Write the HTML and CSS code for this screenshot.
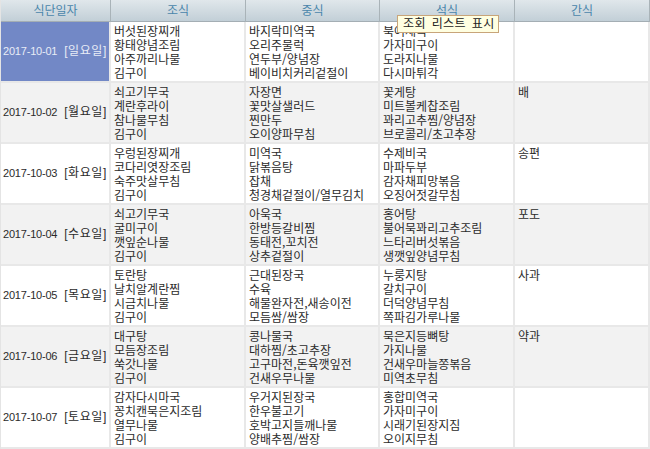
FILE: index.html
```html
<!DOCTYPE html>
<html lang="ko">
<head>
<meta charset="utf-8">
<title>식단 조회</title>
<link rel="stylesheet" href="styles.css">
</head>
<body>
<div class="wrap">
<table class="menu">
<colgroup><col class="c-date"><col class="c-a"><col class="c-b"><col class="c-a"><col class="c-last"></colgroup>
<thead>
<tr><th>식단일자</th><th>조식</th><th>중식</th><th>석식</th><th>간식</th></tr>
</thead>
<tbody>
<tr class="selected"><td class="date">2017-10-01 <span class="day">[일요일]</span></td><td>버섯된장찌개<br>황태양념조림<br>아주까리나물<br>김구이</td><td>바지락미역국<br>오리주물럭<br>연두부/양념장<br>베이비치커리겉절이</td><td>북어채국<br>가자미구이<br>도라지나물<br>다시마튀각</td><td></td></tr>
<tr class="alt"><td class="date">2017-10-02 <span class="day">[월요일]</span></td><td>쇠고기무국<br>계란후라이<br>참나물무침<br>김구이</td><td>자장면<br>꽃맛살샐러드<br>찐만두<br>오이양파무침</td><td>꽃게탕<br>미트볼케찹조림<br>꽈리고추찜/양념장<br>브로콜리/초고추장</td><td>배</td></tr>
<tr><td class="date">2017-10-03 <span class="day">[화요일]</span></td><td>우렁된장찌개<br>코다리엿장조림<br>숙주맛살무침<br>김구이</td><td>미역국<br>닭볶음탕<br>잡채<br>청경채겉절이/열무김치</td><td>수제비국<br>마파두부<br>감자채피망볶음<br>오징어젓갈무침</td><td>송편</td></tr>
<tr class="alt"><td class="date">2017-10-04 <span class="day">[수요일]</span></td><td>쇠고기무국<br>굴미구이<br>깻잎순나물<br>김구이</td><td>아욱국<br>한방등갈비찜<br>동태전,꼬치전<br>상추겉절이</td><td>홍어탕<br>불어묵꽈리고추조림<br>느타리버섯볶음<br>생깻잎양념무침</td><td>포도</td></tr>
<tr><td class="date">2017-10-05 <span class="day">[목요일]</span></td><td>토란탕<br>날치알계란찜<br>시금치나물<br>김구이</td><td>근대된장국<br>수육<br>해물완자전,새송이전<br>모듬쌈/쌈장</td><td>누룽지탕<br>갈치구이<br>더덕양념무침<br>쪽파김가루나물</td><td>사과</td></tr>
<tr class="alt"><td class="date">2017-10-06 <span class="day">[금요일]</span></td><td>대구탕<br>모듬장조림<br>쑥갓나물<br>김구이</td><td>콩나물국<br>대하찜/초고추장<br>고구마전,돈육깻잎전<br>건새우무나물</td><td>묵은지등뼈탕<br>가지나물<br>건새우마늘쫑볶음<br>미역초무침</td><td>약과</td></tr>
<tr><td class="date">2017-10-07 <span class="day">[토요일]</span></td><td>감자다시마국<br>꽁치캔묵은지조림<br>열무나물<br>김구이</td><td>우거지된장국<br>한우불고기<br>호박고지들깨나물<br>양배추찜/쌈장</td><td>홍합미역국<br>가자미구이<br>시래기된장지짐<br>오이지무침</td><td></td></tr>
</tbody>
</table>
<div class="tooltip">조회 리스트 표시</div>
</div>
</body>
</html>
```
FILE: styles.css
```css
* { box-sizing: border-box; }
html, body { margin: 0; padding: 0; background: #fff; }
body { font-family: "Noto Sans CJK KR", "Liberation Sans", sans-serif; font-size: 12px; color: #2b2b2b; overflow: hidden; }
.wrap { position: relative; width: 650px; height: 449px; }
.menu { border-collapse: separate; border-spacing: 0; table-layout: fixed; width: 649px; border-left: 1px solid #e4e4e4; }
.c-date { width: 110px; }
.c-a { width: 135px; }
.c-b { width: 134px; }
.c-last { width: 135px; }
.menu th { height: 22px; padding: 0 0 1px; font-weight: 400; font-size: 12px; line-height: 14px; color: #4a86ab; text-align: center; background: linear-gradient(#e0e7eb, #c2cfd7); border-right: 1px solid #a9b3b8; border-bottom: 1px solid #a4aeb4; }
.menu td { height: 61px; padding: 2px 3px 0; line-height: 14px; vertical-align: top; border-right: 2px solid #e8e8e8; border-bottom: 2px solid #e8e8e8; white-space: nowrap; overflow: hidden; }
.menu td.date { padding: 0 0 2px 2px; vertical-align: middle; font-family: "Liberation Sans", "Noto Sans CJK KR", sans-serif; font-size: 11px; letter-spacing: -0.2px; word-spacing: 4px; }
.day { font-size: 12px; letter-spacing: 0.6px; }
.alt td { background: #f2f2f2; }
.selected td.date { background: #7288c6; color: #e8ecf6; }
.tooltip { position: absolute; left: 397px; top: 15px; width: 102px; height: 18px; padding: 0 5px; line-height: 14px; font-size: 12px; letter-spacing: 0.4px; word-spacing: 2px; white-space: nowrap; color: #222; background: #ffffe1; border: 1px solid #c8a57a; }
```
